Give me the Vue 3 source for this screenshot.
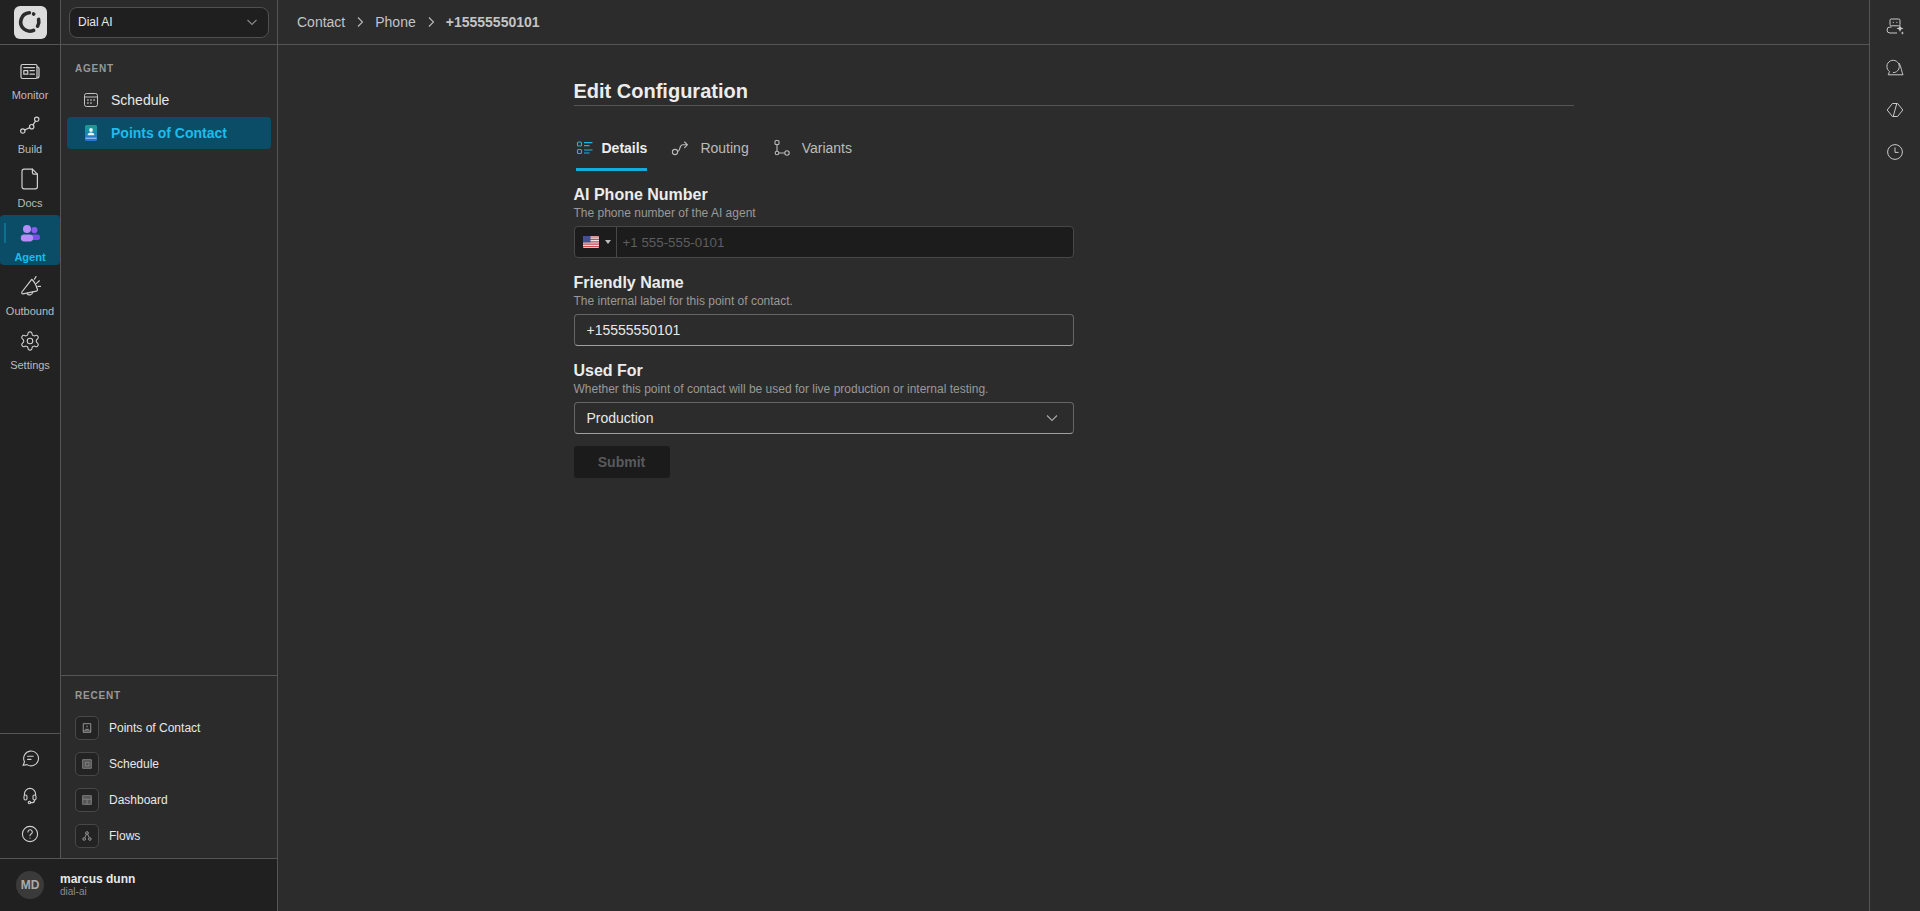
<template>
  <div class="app">
    <aside class="sidebar">
      <div class="top-row">
        <div class="logo-cell">
          <div class="logo">
            <svg width="26" height="26" viewBox="0 0 26 26" fill="none" stroke="#2b2b2b" stroke-width="3.6" stroke-linecap="round">
              <path d="M12.4 3.8A9.2 9.2 0 0 0 7 20A9.2 9.2 0 0 0 16.6 21.4" />
              <path d="M16.6 5l.1 .05" />
              <path d="M21.6 10.4A9.2 9.2 0 0 1 20.6 17.2" />
            </svg>
          </div>
        </div>
        <div class="org-cell">
          <div class="org-select">
            <span>Dial AI</span>
            <svg class="chev" width="14" height="14" viewBox="0 0 14 14" fill="none" stroke="#8c8c8c" stroke-width="1.1"><path d="M2.5 5l4.5 4.5L11.5 5" /></svg>
          </div>
        </div>
      </div>

      <div class="middle">
        <nav class="rail">
          <div class="rail-main">
            <div v-for="item in railItems" :key="item.label" class="rail-item" :class="{ active: item.active }">
              <span v-if="item.active" class="rail-mark"></span>
              <svg v-if="item.active" width="22" height="22" viewBox="0 -1.5 22 22">
                <circle cx="15.4" cy="6.6" r="3.1" fill="#8a5cf0" />
                <rect x="12" y="11" width="9" height="5.6" rx="2.6" fill="#7c4fe6" />
                <circle cx="8" cy="5.6" r="4" fill="#b58cf8" />
                <rect x="1.8" y="11" width="12.4" height="7" rx="3.4" fill="#b58cf8" />
              </svg>
              <svg v-else width="22" height="22" :viewBox="item.box || '0 0 22 22'" fill="none" stroke="#d0d0d0" stroke-width="1.2" stroke-linecap="round" stroke-linejoin="round">
                <path v-for="d in item.icon" :key="d" :d="d" />
              </svg>
              <span class="rail-label">{{ item.label }}</span>
            </div>
          </div>
          <div class="rail-bottom">
            <svg width="18" height="18" viewBox="0 0 18 18" fill="none" stroke="#d0d0d0" stroke-width="1.1" stroke-linecap="round">
              <path d="M2.2 16.2l1.3-3.4A7.4 7.4 0 1 1 6 15.6z" />
              <path d="M6.6 7.2h5.6M6.6 10.4h3.4" />
            </svg>
            <svg width="18" height="18" viewBox="0 0 18 18" fill="none" stroke="#d0d0d0" stroke-width="1.1" stroke-linecap="round">
              <path d="M3.4 8V7a5.6 5.6 0 0 1 11.2 0v1" />
              <rect x="3" y="8" width="3" height="5" rx="1.4" />
              <rect x="12" y="8" width="3" height="5" rx="1.4" />
              <path d="M13.5 13v.6a2 2 0 0 1-2 2H9.6" />
              <circle cx="8.4" cy="15.6" r="1.2" />
            </svg>
            <svg width="18" height="18" viewBox="0 0 18 18" fill="none" stroke="#d0d0d0" stroke-width="1.1" stroke-linecap="round">
              <circle cx="9" cy="9" r="7.6" />
              <path d="M6.9 7a2.2 2.2 0 1 1 3.3 1.9c-.8.5-1.2 1-1.2 1.9" />
              <path d="M9 13v.1" />
            </svg>
          </div>
        </nav>

        <div class="panel">
          <div class="panel-top">
            <div class="section-title">AGENT</div>
            <div class="nav-item">
              <svg width="16" height="16" viewBox="0 0 16 16" fill="none" stroke="#c4c4c4" stroke-width="1">
                <rect x="1.5" y="1.5" width="13" height="13" rx="2" />
                <path d="M1.5 5h13" />
                <path d="M4.2 8h1.4M7.3 8h1.4M10.4 8h1.4M4.2 11h1.4M7.3 11h1.4" stroke-width="1.3" />
              </svg>
              <span>Schedule</span>
            </div>
            <div class="nav-item active">
              <svg width="16" height="16" viewBox="0 0 16 16">
                <defs>
                  <linearGradient id="book" x1="0" y1="0" x2="0" y2="1">
                    <stop offset="0" stop-color="#14a08a" />
                    <stop offset="1" stop-color="#2a6fdc" />
                  </linearGradient>
                </defs>
                <rect x="2" y="0" width="12" height="16" rx="1.5" fill="url(#book)" />
                <circle cx="8" cy="5" r="1.9" fill="#e6f7f4" />
                <path d="M4.6 10.2c0-1.7 1.4-2.6 3.4-2.6s3.4.9 3.4 2.6z" fill="#e6f7f4" />
                <path d="M2.5 13.2h11" stroke="#c6dcfa" stroke-width="0.9" />
              </svg>
              <span>Points of Contact</span>
            </div>
          </div>
          <div class="recent">
            <div class="section-title recent-title">RECENT</div>
            <div v-for="item in recentItems" :key="item.label" class="recent-item">
              <div class="tile">
                <svg width="10" height="10" viewBox="0 0 12 12" :fill="item.fill || 'none'" :stroke="item.fill ? '#8a8a8a' : '#a8a8a8'" stroke-width="1">
                  <path v-for="d in item.icon" :key="d" :d="d" />
                </svg>
              </div>
              <span>{{ item.label }}</span>
            </div>
          </div>
        </div>
      </div>

      <div class="user">
        <div class="avatar">MD</div>
        <div class="user-text">
          <div class="user-name">marcus dunn</div>
          <div class="user-org">dial-ai</div>
        </div>
      </div>
    </aside>

    <main class="main">
      <header class="crumbs">
        <span>Contact</span>
        <svg width="14" height="14" viewBox="0 0 14 14" fill="none" stroke="#bbb" stroke-width="1.1"><path d="M5 2.5L9.5 7 5 11.5" /></svg>
        <span>Phone</span>
        <svg width="14" height="14" viewBox="0 0 14 14" fill="none" stroke="#bbb" stroke-width="1.1"><path d="M5 2.5L9.5 7 5 11.5" /></svg>
        <span class="crumb-current">+15555550101</span>
      </header>

      <section class="content">
        <h1 class="title">Edit Configuration</h1>

        <div class="tabs">
          <div class="tab active">
            <svg width="18" height="18" viewBox="0 0 18 18" fill="none" stroke="#1cb4e0" stroke-width="1.2">
              <rect x="1.5" y="3" width="4" height="4" rx="1" />
              <rect x="1.5" y="10.5" width="4" height="4" rx="1" />
              <path d="M8 3.6h8.5M8 6.6h5.5M8 11h8.5M8 14h5.5" />
            </svg>
            <span>Details</span>
          </div>
          <div class="tab">
            <svg width="18" height="18" viewBox="0 0 18 18" fill="none" stroke="#bbb" stroke-width="1.1" stroke-linecap="round">
              <circle cx="4" cy="13" r="2.6" />
              <path d="M6.6 12.4c3-.4 1.4-6 4.8-6.6h4.8M13.6 3l2.8 2.8-2.8 2.8" />
            </svg>
            <span>Routing</span>
          </div>
          <div class="tab">
            <svg width="18" height="18" viewBox="0 0 18 18" fill="none" stroke="#bbb" stroke-width="1.1">
              <rect x="2" y="1.5" width="4" height="4" rx="1" />
              <circle cx="4" cy="14" r="1.8" />
              <circle cx="14" cy="14" r="2.2" />
              <path d="M4 5.5v6.6M5.8 14h6" />
            </svg>
            <span>Variants</span>
          </div>
        </div>

        <form class="form" @submit.prevent>
          <div class="field">
            <label>AI Phone Number</label>
            <p>The phone number of the AI agent</p>
            <div class="phone">
              <div class="flag-box">
                <svg width="16" height="12" viewBox="0 0 16 12">
                  <rect width="16" height="12" rx="1" fill="#e8e4e6" />
                  <path d="M0 1h16M0 3.4h16M0 5.8h16M0 8.2h16M0 10.6h16" stroke="#c84a52" stroke-width="1.2" />
                  <rect width="7.5" height="6.4" fill="#44508e" />
                </svg>
                <span class="caret"></span>
              </div>
              <input type="text" placeholder="+1 555-555-0101" />
            </div>
          </div>

          <div class="field">
            <label>Friendly Name</label>
            <p>The internal label for this point of contact.</p>
            <input v-model="friendlyName" class="text-input" type="text" />
          </div>

          <div class="field">
            <label>Used For</label>
            <p>Whether this point of contact will be used for live production or internal testing.</p>
            <div class="text-input select">
              <span>Production</span>
              <svg width="16" height="16" viewBox="0 0 16 16" fill="none" stroke="#aaa" stroke-width="1.1"><path d="M3 5.5l5 5 5-5" /></svg>
            </div>
          </div>

          <button class="submit" type="submit" disabled>Submit</button>
        </form>
      </section>
    </main>

    <aside class="tools">
      <svg width="18" height="18" viewBox="0 0 18 18" fill="none" stroke="#c8c8c8" stroke-width="1">
        <rect x="4" y="2" width="10" height="6.8" rx="1.2" />
        <path d="M6.8 5.4h1M10.4 5.4h1" />
        <path d="M5.5 10H4a3 3 0 0 0 0 6h7" />
        <path d="M14 8l1 2.5 2.5 1-2.5 1-1 2.5-1-2.5-2.5-1 2.5-1zM16.4 14.2l.5 1.3 1.1.5-1.1.5-.5 1.3-.5-1.3-1.1-.5 1.1-.5z" fill="#c8c8c8" stroke="none" />
      </svg>
      <svg width="18" height="18" viewBox="0 0 18 18" fill="none" stroke="#c8c8c8" stroke-width="1">
        <path d="M2.2 15.8l1.4-3.2A6.2 6.2 0 1 1 13.3 7.5c0 3.6-3 6.3-6.4 6.1" />
        <path d="M2.2 15.8H17c-1.4-3-1.6-7.6-4-11.8" />
      </svg>
      <svg width="18" height="18" viewBox="0 0 18 18" fill="none" stroke="#c8c8c8" stroke-width="1" stroke-linejoin="round">
        <path d="M6.4 2.5h5.2L16.8 9l-5.2 6.5H6.4L1.2 9z" />
        <path d="M10.8 2.5L7.2 15.5" />
      </svg>
      <svg width="18" height="18" viewBox="0 0 18 18" fill="none" stroke="#c8c8c8" stroke-width="1">
        <circle cx="9" cy="9" r="7.4" />
        <path d="M9 4.4V9.4h3.6" />
      </svg>
    </aside>
  </div>
</template>

<script setup>
import { ref } from 'vue'

const friendlyName = ref('+15555550101')

const railItems = [
  {
    label: 'Monitor',
    icon: [
      'M2 17V6a1.5 1.5 0 0 1 1.5-1.5h13A1.5 1.5 0 0 1 18 6v11a1.5 1.5 0 0 1-1.5 1.5h-13A1.5 1.5 0 0 1 2 17z',
      'M18 7h.6A1.4 1.4 0 0 1 20 8.4v7.6a2 2 0 0 1-2 2',
      'M4.8 10.6h4v3.6h-4zM11 10.6h4.4M11 14.2h4.4M4.8 7.6h10.6',
    ],
  },
  {
    label: 'Build',
    icon: [
      'M6 17a2.2 2.2 0 1 1-4.4 0a2.2 2.2 0 0 1 4.4 0z',
      'M14.9 12.7a2.2 2.2 0 1 1-4.4 0a2.2 2.2 0 0 1 4.4 0z',
      'M19.9 5.3a2.2 2.2 0 1 1-4.4 0a2.2 2.2 0 0 1 4.4 0z',
      'M5.7 16l5-2.4M14 10.9l2.5-3.8',
    ],
  },
  {
    label: 'Docs',
    icon: [
      'M5 1.2h8.4l5 5v12.6a2 2 0 0 1-2 2H5a2 2 0 0 1-2-2V3.2a2 2 0 0 1 2-2z',
      'M13.4 1.2v3.4a1.6 1.6 0 0 0 1.6 1.6h3.4',
    ],
  },
  { label: 'Agent', active: true },
  {
    label: 'Outbound',
    icon: [
      'M12.7 3.3L2.9 16a1.2 1.2 0 0 0 1 1.9l13.6-2.8a1.2 1.2 0 0 0 1-1.6C17.4 10 15.4 5.6 12.7 3.3z',
      'M8 17.4a3 3 0 0 0 5.6-1.2',
      'M15.4 3.2l1.6-2.6M17.4 7.4l3-2.6M19 10.4h2.6',
    ],
  },
  {
    label: 'Settings',
    box: '0 0 24 24',
    icon: [
      'M12.22 2h-.44a2 2 0 0 0-2 2v.18a2 2 0 0 1-1 1.73l-.43.25a2 2 0 0 1-2 0l-.15-.08a2 2 0 0 0-2.73.73l-.22.38a2 2 0 0 0 .73 2.73l.15.1a2 2 0 0 1 1 1.72v.51a2 2 0 0 1-1 1.74l-.15.09a2 2 0 0 0-.73 2.73l.22.38a2 2 0 0 0 2.73.73l.15-.08a2 2 0 0 1 2 0l.43.25a2 2 0 0 1 1 1.73V20a2 2 0 0 0 2 2h.44a2 2 0 0 0 2-2v-.18a2 2 0 0 1 1-1.73l.43-.25a2 2 0 0 1 2 0l.15.08a2 2 0 0 0 2.73-.73l.22-.39a2 2 0 0 0-.73-2.73l-.15-.08a2 2 0 0 1-1-1.74v-.5a2 2 0 0 1 1-1.74l.15-.09a2 2 0 0 0 .73-2.73l-.22-.38a2 2 0 0 0-2.73-.73l-.15.08a2 2 0 0 1-2 0l-.43-.25a2 2 0 0 1-1-1.73V4a2 2 0 0 0-2-2z',
      'M15 12a3 3 0 1 1-6 0a3 3 0 0 1 6 0z',
    ],
  },
]

const recentItems = [
  { label: 'Points of Contact', icon: ['M1.5 .8h9v10.4h-9z', 'M6 3v2.2M3.8 7.6h4.4', 'M1.5 9.4h9'] },
  { label: 'Schedule', fill: '#555', icon: ['M.8 .8h10.4v10.4H.8z', 'M4 4h4.4v4.4H4z'] },
  { label: 'Dashboard', fill: '#555', icon: ['M.8 .8h10.4v10.4H.8z', 'M.8 5h10.4M6 5v6.2'] },
  { label: 'Flows', icon: ['M7.6 2.4a1.6 1.6 0 1 1-3.2 0a1.6 1.6 0 0 1 3.2 0z', 'M4.2 9.6a1.6 1.6 0 1 1-3.2 0a1.6 1.6 0 0 1 3.2 0z', 'M11 9.6a1.6 1.6 0 1 1-3.2 0a1.6 1.6 0 0 1 3.2 0z', 'M5.2 3.8L3.4 8M6.8 3.8L8.6 8'] },
]
</script>

<style>
html,
body {
  margin: 0;
  background: #2c2c2c;
}
</style>

<style scoped>
.app {
  display: flex;
  height: 100vh;
  overflow: hidden;
  background: #2c2c2c;
  color: #e8e8e8;
  font-family: 'Liberation Sans', Arial, sans-serif;
}

.sidebar {
  width: 277px;
  flex-shrink: 0;
  display: flex;
  flex-direction: column;
  border-right: 1px solid #555;
  box-sizing: content-box;
}

.top-row {
  display: flex;
  height: 44px;
  border-bottom: 1px solid #555;
}

.logo-cell {
  width: 60px;
  display: flex;
  align-items: center;
  justify-content: center;
  background: #222;
  border-right: 1px solid #555;
}

.logo {
  width: 33px;
  height: 33px;
  border-radius: 6px;
  background: #dcdcdc;
  display: flex;
  align-items: center;
  justify-content: center;
}

.org-cell {
  flex: 1;
  display: flex;
  align-items: center;
  padding: 0 8px;
  background: #2b2b2b;
}

.org-select {
  flex: 1;
  height: 29px;
  display: flex;
  align-items: center;
  justify-content: space-between;
  padding: 0 9px 0 8px;
  background: #1f1f1f;
  border: 1px solid #505050;
  border-radius: 8px;
  font-size: 12px;
  color: #e8e8e8;
}

.middle {
  flex: 1;
  display: flex;
  min-height: 0;
}

.rail {
  width: 60px;
  display: flex;
  flex-direction: column;
  justify-content: space-between;
  background: #222;
  border-right: 1px solid #555;
}

.rail-main {
  display: flex;
  flex-direction: column;
  gap: 4px;
  padding-top: 8px;
}

.rail-item {
  position: relative;
  height: 50px;
  display: flex;
  flex-direction: column;
  align-items: center;
  padding-top: 7px;
  box-sizing: border-box;
  border-radius: 4px;
  font-size: 11px;
  color: #bcbcbc;
}

.rail-item.active {
  background: #0b4d66;
  color: #1cbcec;
  font-weight: 700;
}

.rail-mark {
  position: absolute;
  left: 4px;
  top: 8px;
  width: 2px;
  height: 20px;
  background: #0e6f8f;
}

.rail-label {
  margin-top: 7px;
  line-height: 13px;
}

.rail-bottom {
  height: 125px;
  box-sizing: border-box;
  border-top: 1px solid #555;
  display: flex;
  flex-direction: column;
  align-items: center;
  justify-content: center;
  gap: 20px;
}

.panel {
  flex: 1;
  display: flex;
  flex-direction: column;
  justify-content: space-between;
  background: #2b2b2b;
}

.panel-top {
  padding: 17px 6px 0;
}

.section-title {
  font-size: 10px;
  font-weight: 700;
  letter-spacing: 0.8px;
  line-height: 14px;
  color: #999;
  padding-left: 8px;
  margin-bottom: 8px;
}

.nav-item {
  height: 32px;
  display: flex;
  align-items: center;
  gap: 12px;
  padding-left: 16px;
  margin-bottom: 1px;
  border-radius: 4px;
  font-size: 14px;
  color: #e8e8e8;
}

.nav-item.active {
  background: #0b4d66;
  color: #1cbcec;
  font-weight: 700;
}

.recent {
  height: 183px;
  box-sizing: border-box;
  border-top: 1px solid #555;
  padding: 13px 14px 0;
}

.recent-title {
  padding-left: 0;
  margin-bottom: 7px;
}

.recent-item {
  height: 36px;
  display: flex;
  align-items: center;
  gap: 10px;
  font-size: 12px;
  color: #e8e8e8;
}

.tile {
  width: 24px;
  height: 24px;
  box-sizing: border-box;
  border: 1px solid #484848;
  border-radius: 5px;
  background: #232323;
  display: flex;
  align-items: center;
  justify-content: center;
}

.user {
  height: 52px;
  display: flex;
  align-items: center;
  gap: 16px;
  padding: 0 16px;
  border-top: 1px solid #555;
  background: #202020;
}

.avatar {
  width: 28px;
  height: 28px;
  border-radius: 50%;
  background: #3a3a3a;
  color: #aaa;
  font-size: 12px;
  font-weight: 700;
  display: flex;
  align-items: center;
  justify-content: center;
}

.user-name {
  font-size: 12px;
  font-weight: 700;
  line-height: 13px;
  color: #e8e8e8;
}

.user-org {
  font-size: 10px;
  line-height: 12px;
  color: #8c8c8c;
}

.main {
  flex: 1;
  min-width: 0;
  display: flex;
  flex-direction: column;
  background: #2c2c2c;
}

.crumbs {
  height: 44px;
  flex-shrink: 0;
  display: flex;
  align-items: center;
  gap: 8px;
  padding: 0 19px;
  border-bottom: 1px solid #555;
  font-size: 14px;
  color: #c4c4c4;
}

.crumb-current {
  font-weight: 700;
}

.content {
  width: 1000px;
  margin: 0 auto;
  padding-top: 34px;
}

.title {
  margin: 0;
  padding-bottom: 2px;
  border-bottom: 1px solid #555;
  font-size: 20px;
  line-height: 24px;
  font-weight: 700;
  color: #ececec;
}

.tabs {
  display: flex;
  gap: 24px;
  padding: 0 2px;
  margin-top: 20px;
}

.tab {
  height: 45px;
  padding-top: 2px;
  box-sizing: border-box;
  display: flex;
  align-items: center;
  gap: 11px;
  border-bottom: 3px solid transparent;
  font-size: 14px;
  color: #bcbcbc;
}

.tab.active {
  gap: 8px;
  border-bottom-color: #12aed8;
  color: #ececec;
  font-weight: 700;
}

.form {
  width: 500px;
  margin-top: 15px;
}

.field {
  margin-bottom: 16px;
}

.field label {
  display: block;
  margin-bottom: 2px;
  font-size: 16px;
  line-height: 17px;
  font-weight: 700;
  color: #ececec;
}

.field p {
  margin: 0 0 5px;
  font-size: 12px;
  line-height: 16px;
  color: #999;
}

.phone {
  display: flex;
  height: 32px;
  box-sizing: border-box;
  border: 1px solid #484848;
  border-radius: 4px;
  background: #1c1c1c;
}

.flag-box {
  width: 42px;
  box-sizing: border-box;
  display: flex;
  align-items: center;
  gap: 6px;
  padding-left: 8px;
  border-right: 1px solid #484848;
}

.caret {
  border-left: 3px solid transparent;
  border-right: 3px solid transparent;
  border-top: 4px solid #bbb;
}

.phone input {
  flex: 1;
  min-width: 0;
  padding: 0 6px;
  border: none;
  outline: none;
  background: transparent;
  font: 13.33px 'Liberation Sans', Arial, sans-serif;
  color: #e8e8e8;
}

.phone input::placeholder {
  color: #5e5e5e;
}

.text-input {
  display: block;
  width: 100%;
  height: 32px;
  box-sizing: border-box;
  padding: 0 12px;
  border: 1px solid #666;
  border-bottom-color: #a0a0a0;
  border-radius: 4px;
  outline: none;
  background: transparent;
  font: 14px 'Liberation Sans', Arial, sans-serif;
  color: #e8e8e8;
}

.select {
  display: flex;
  align-items: center;
  justify-content: space-between;
  padding-right: 13px;
}

.submit {
  display: block;
  width: 96px;
  height: 32px;
  margin-top: -4px;
  border: none;
  border-radius: 3px;
  background: #1b1b1b;
  font: 700 14px 'Liberation Sans', Arial, sans-serif;
  color: #5a5a5a;
}

.tools {
  width: 50px;
  flex-shrink: 0;
  display: flex;
  flex-direction: column;
  align-items: center;
  gap: 24px;
  padding-top: 17px;
  border-left: 1px solid #555;
  background: #2c2c2c;
}
</style>
